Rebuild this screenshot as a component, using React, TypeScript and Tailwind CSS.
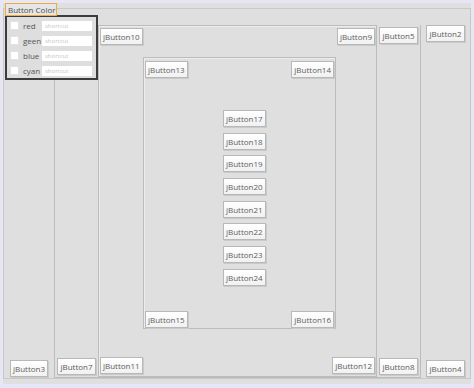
import React from "react";

function JBtn({ label, hidden = false }: { label: string; hidden?: boolean }) {
  return (
    <div
      className={`h-[17px] px-[2px] border border-[#b8b8b8] bg-linear-to-b from-white to-[#f1f1f1] shadow-[1px_1px_0_#cacaca] text-[8px] leading-[15px] text-[#5e5e5e] whitespace-nowrap shrink-0 ${hidden ? "invisible" : ""}`}
    >
      {label}
    </div>
  );
}

const SHORTCUTS = ["red", "geen", "blue", "cyan"];

// popup that sits over the top-left corner and hides jButton1 / jButton6
function ColorPopup() {
  return (
    <div className="absolute left-[5px] top-[3px]">
      <div className="relative z-10 w-[52px] h-[13px] border border-[#f0ab3a] bg-[#e6e6e6] px-[2px] text-[8px] leading-[11px] text-[#4e4e4e] whitespace-nowrap">
        Button Color
      </div>
      <div className="-mt-[1px] w-[93px] border-2 border-[#3c3c3c] bg-[#dedede] pt-[1px]">
        {SHORTCUTS.map((name) => (
          <div key={name} className="h-[15px] flex items-center">
            <div className="ml-[3px] w-[9px] h-[9px] bg-white border border-[#e2e2e2] shrink-0" />
            <span className="ml-[4px] w-[19px] shrink-0 text-[8px] leading-[10px] text-[#555] whitespace-nowrap">{name}</span>
            <div className="w-[50px] h-[10px] shrink-0 overflow-hidden bg-white px-[3px] text-[6px] leading-[10px] text-[#c6c6c6] whitespace-nowrap">
              shortcut
            </div>
          </div>
        ))}
      </div>
    </div>
  );
}

export default function App() {
  return (
    <div className="relative w-[474px] h-[388px] bg-[#e6e6f7] pt-[3px] px-[3px] pb-[4px] font-['Open_Sans',sans-serif]">
      <div className="h-full bg-[#dfdfdf] py-[5px]">
        {/* outer panel */}
        <div className="h-full border border-[#c8c8c8] flex">
          <div className="w-[50px] flex flex-col items-center justify-between pt-[16px] pb-[1px]">
            <JBtn label="jButton1" hidden />
            <JBtn label="jButton3" />
          </div>

          {/* second panel */}
          <div className="w-[367px] mt-[16px] border-x border-b border-[#bcbcbc] flex">
            <div className="w-[43px] flex flex-col items-center justify-between py-[2px]">
              <JBtn label="jButton6" hidden />
              <JBtn label="jButton7" />
            </div>

            {/* third panel */}
            <div className="w-[279px] border border-[#bcbcbc] shadow-[inset_1px_1px_0_#ececec] flex flex-col pt-[2px] px-[1px] pb-[2px]">
              <div className="flex justify-between">
                <JBtn label="jButton10" />
                <JBtn label="jButton9" />
              </div>

              {/* inner panel */}
              <div className="ml-[43px] mt-[12px] w-[193px] h-[272px] border border-[#bcbcbc] shadow-[inset_1px_1px_0_#ececec] flex flex-col pt-[3px] px-[1px]">
                <div className="flex justify-between">
                  <JBtn label="jButton13" />
                  <JBtn label="jButton14" />
                </div>
                <div className="ml-[78px] mt-[32px] flex flex-col items-start gap-[5.7px]">
                  {[17, 18, 19, 20, 21, 22, 23, 24].map((n) => (
                    <JBtn key={n} label={`jButton${n}`} />
                  ))}
                </div>
                <div className="mt-auto flex justify-between">
                  <JBtn label="jButton15" />
                  <JBtn label="jButton16" />
                </div>
              </div>

              <div className="mt-auto flex justify-between">
                <JBtn label="jButton11" />
                <JBtn label="jButton12" />
              </div>
            </div>

            <div className="w-[43px] flex flex-col items-center justify-between py-[2px]">
              <JBtn label="jButton5" />
              <JBtn label="jButton8" />
            </div>
          </div>

          <div className="w-[49px] flex flex-col items-center justify-between pt-[16px] pb-[1px]">
            <JBtn label="jButton2" />
            <JBtn label="jButton4" />
          </div>
        </div>
      </div>

      <ColorPopup />
    </div>
  );
}
